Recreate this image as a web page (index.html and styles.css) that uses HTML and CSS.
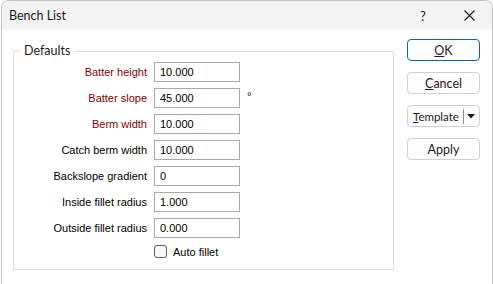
FILE: index.html
```html
<!DOCTYPE html>
<html lang="en">
<head>
    <meta charset="UTF-8">
    <title>Bench List</title>
    <link rel="stylesheet" href="styles.css">
</head>
<body>
    <div class="window">
        <div class="titlebar">
            <span class="title">Bench List</span>
            <span class="help">?</span>
            <span class="close">
                <svg width="11" height="11" viewBox="0 0 11 11"><path d="M0.5 0.5 L10.5 10.5 M10.5 0.5 L0.5 10.5" stroke="#1a1a1a" stroke-width="1.1" fill="none"/></svg>
            </span>
        </div>
        <div class="content">
            <fieldset class="group">
                <legend>Defaults</legend>
                <div class="form">
                    <label class="req" for="bh">Batter height</label>
                    <input type="text" id="bh" value="10.000">
                    <span></span>

                    <label class="req" for="bs">Batter slope</label>
                    <input type="text" id="bs" value="45.000">
                    <span class="unit">°</span>

                    <label class="req" for="bw">Berm width</label>
                    <input type="text" id="bw" value="10.000">
                    <span></span>

                    <label for="cbw">Catch berm width</label>
                    <input type="text" id="cbw" value="10.000">
                    <span></span>

                    <label for="bg">Backslope gradient</label>
                    <input type="text" id="bg" value="0">
                    <span></span>

                    <label for="ifr">Inside fillet radius</label>
                    <input type="text" id="ifr" value="1.000">
                    <span></span>

                    <label for="ofr">Outside fillet radius</label>
                    <input type="text" id="ofr" value="0.000">
                    <span></span>

                    <span></span>
                    <label class="check"><span class="box"></span>Auto fillet</label>
                    <span></span>
                </div>
            </fieldset>
            <div class="buttons">
                <button class="btn default"><u>O</u>K</button>
                <button class="btn"><u>C</u>ancel</button>
                <button class="btn split"><span class="split-text"><u>T</u>emplate</span><span class="split-arrow"><svg width="8" height="5" viewBox="0 0 8 5"><path d="M0 0 H8 L4 4.5 Z" fill="#1a1a1a"/></svg></span></button>
                <button class="btn">Apply</button>
            </div>
        </div>
    </div>
</body>
</html>
```

FILE: styles.css
```css
body {
    margin: 0;
    background-color: #fff;
    font-family: Lato, "Noto Sans", sans-serif;
}
.window {
    margin-left: 1px;
    width: 492px;
    height: 290px;
    box-sizing: border-box;
    border: 1px solid #c4c4c4;
    border-bottom: none;
    border-radius: 8px 8px 0 0;
    background-color: #fff;
    overflow: hidden;
}
.titlebar {
    height: 29px;
    background-color: #f3f3f3;
    display: flex;
    align-items: center;
    font-size: 12.5px;
    color: #1a1a1a;
}
.title {
    margin-left: 7px;
    flex: 1;
}
.help {
    width: 46px;
    text-align: center;
    font-size: 13px;
}
.close {
    width: 46px;
    display: flex;
    justify-content: center;
}
.content {
    display: flex;
    padding: 14px 0 0 11px;
}
.group {
    margin: 0;
    padding: 4px 0 0 0;
    width: 381px;
    height: 226px;
    box-sizing: border-box;
    border: 1px solid #dcdcdc;
    border-radius: 0;
}
.group legend {
    margin-left: 6px;
    padding: 0 4px;
    font-size: 12.5px;
    line-height: 14px;
    color: #1a1a1a;
}
.form {
    display: grid;
    grid-template-columns: 133px 86px auto;
    column-gap: 7px;
    row-gap: 6px;
    grid-auto-rows: 20px;
    align-items: center;
    font-family: "Liberation Sans", Arial, sans-serif;
    font-size: 11px;
}
.form label {
    text-align: right;
    color: #000;
}
.form label.req {
    color: #800000;
}
.form input[type="text"] {
    width: 86px;
    height: 20px;
    box-sizing: border-box;
    border: 1px solid #a8a8a8;
    padding: 0 0 0 5px;
    margin: 0;
    font-family: "Liberation Sans", Arial, sans-serif;
    font-size: 11px;
    color: #000;
    outline: none;
}
.unit {
    font-size: 11px;
    margin-top: -4px;
}
.form label.check {
    display: flex;
    align-items: center;
    align-self: start;
    margin-top: 1px;
    text-align: left;
    white-space: nowrap;
}
.box {
    width: 13px;
    height: 13px;
    box-sizing: border-box;
    border: 1px solid #5c5c5c;
    border-radius: 3px;
    background-color: #f7f7f7;
    margin-right: 6px;
}
.buttons {
    display: flex;
    flex-direction: column;
    gap: 11px;
    margin-left: 13px;
    margin-top: -5px;
}
.btn {
    width: 73px;
    height: 22px;
    box-sizing: border-box;
    border: 1px solid #d0d0d0;
    border-radius: 4px;
    background-color: #fdfdfd;
    font-family: Lato, "Noto Sans", sans-serif;
    font-size: 12.5px;
    color: #1a1a1a;
    padding: 0;
    display: flex;
    align-items: center;
    justify-content: center;
}
.btn.default {
    border-color: #0067c0;
}
.btn.split {
    justify-content: flex-start;
}
.split-text {
    padding-left: 5px;
    padding-right: 4px;
    border-right: 1px solid #8a8a8a;
    line-height: 15px;
    font-size: 11.5px;
}
.split-arrow {
    flex: 1;
    display: flex;
    justify-content: center;
}
```
